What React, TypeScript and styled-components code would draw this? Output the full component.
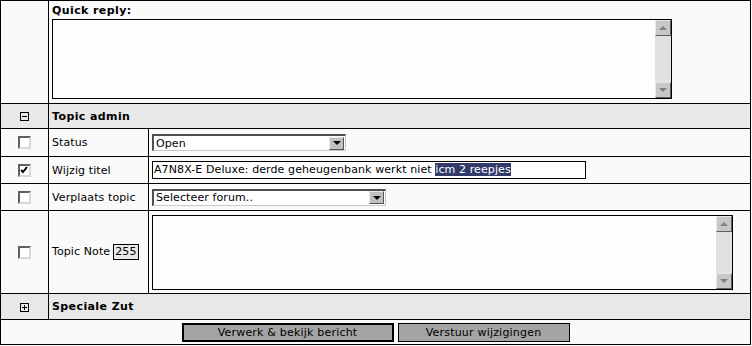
import styled, { createGlobalStyle } from "styled-components";

const GlobalStyle = createGlobalStyle`
  body {
    margin: 0;
    background: #fafafa;
    font-family: "DejaVu Sans", Verdana, sans-serif;
    font-size: 11px;
    letter-spacing: 0.1px;
    color: #000;
  }
`;

const Table = styled.table`
  width: 751px;
  border-collapse: collapse;
  border: 1px solid #000;
  background: #fafafa;
`;

const Row = styled.tr<{ $h: number }>`
  height: ${({ $h }) => $h}px;
`;

const Cell = styled.td<{ $head?: boolean; $w?: number }>`
  border: 1px solid #000;
  padding: 0 3px;
  vertical-align: middle;
  background: ${({ $head }) => ($head ? "#e8e8e8" : "#fafafa")};
  font-weight: ${({ $head }) => ($head ? "bold" : "normal")};
  letter-spacing: ${({ $head }) => ($head ? "0.4px" : "0.1px")};
  width: ${({ $w }) => ($w ? `${$w}px` : "auto")};
  white-space: nowrap;
`;

const IconCell = styled(Cell)`
  text-align: center;
  padding: 0;
  width: 47px;
`;

const QuickCell = styled(Cell)`
  vertical-align: top;
  padding: 3px 3px 4px 3px;
`;

const Caption = styled.div`
  font-weight: bold;
  letter-spacing: 0.4px;
  line-height: 14px;
  margin-bottom: 1px;
`;

const TextBox = styled.div<{ $w: number; $h: number }>`
  display: flex;
  width: ${({ $w }) => $w}px;
  height: ${({ $h }) => $h}px;
  border: 1px solid #000;
  background: #fdfdfd;
  box-sizing: border-box;
`;

const Area = styled.textarea`
  flex: 1;
  border: none;
  outline: none;
  resize: none;
  background: transparent;
  font: inherit;
`;

const Scrollbar = styled.div`
  width: 16px;
  display: flex;
  flex-direction: column;
  justify-content: space-between;
  background: #e0e0e0;
`;

const ScrollBtn = styled.div`
  width: 16px;
  height: 16px;
  box-sizing: border-box;
  background: #c8c8c8;
  border-top: 1px solid #e8e8e8;
  border-left: 1px solid #e8e8e8;
  border-right: 1px solid #606060;
  border-bottom: 1px solid #606060;
  display: flex;
  align-items: center;
  justify-content: center;
`;

const Arrow = styled.span<{ $up?: boolean; $color?: string }>`
  width: 0;
  height: 0;
  border-left: 4px solid transparent;
  border-right: 4px solid transparent;
  ${({ $up, $color }) =>
    $up
      ? `border-bottom: 4px solid ${$color || "#808080"};`
      : `border-top: 4px solid ${$color || "#808080"};`}
`;

const ToggleBox = styled.span`
  display: inline-flex;
  align-items: center;
  justify-content: center;
  width: 9px;
  height: 9px;
  box-sizing: border-box;
  border: 1px solid #000;
  position: relative;
  vertical-align: middle;
`;

const Bar = styled.span<{ $vertical?: boolean }>`
  position: absolute;
  background: #000;
  ${({ $vertical }) =>
    $vertical
      ? "width: 1px; height: 5px; left: 3px; top: 1px;"
      : "width: 5px; height: 1px; left: 1px; top: 3px;"}
`;

const Check = styled.span`
  display: inline-flex;
  align-items: center;
  justify-content: center;
  width: 13px;
  height: 13px;
  box-sizing: border-box;
  background: #fff;
  border-top: 2px solid #606060;
  border-left: 2px solid #606060;
  border-right: 2px solid #d8d8d8;
  border-bottom: 2px solid #d8d8d8;
  vertical-align: middle;
`;

const Select = styled.div<{ $w: number }>`
  display: flex;
  align-items: center;
  width: ${({ $w }) => $w}px;
  height: 17px;
  box-sizing: border-box;
  background: #fff;
  border-top: 2px solid #505050;
  border-left: 2px solid #505050;
  border-right: 1px solid #c8c8c8;
  border-bottom: 1px solid #c8c8c8;
  padding-left: 2px;
`;

const SelectText = styled.span`
  flex: 1;
`;

const DropBtn = styled.div`
  width: 15px;
  height: 13px;
  box-sizing: border-box;
  background: #c0c0c0;
  border-top: 1px solid #e8e8e8;
  border-left: 1px solid #e8e8e8;
  border-right: 1px solid #505050;
  border-bottom: 1px solid #505050;
  display: flex;
  align-items: center;
  justify-content: center;
  margin-right: 1px;
`;

const TitleInput = styled.div`
  width: 434px;
  height: 18px;
  box-sizing: border-box;
  border: 1px solid #000;
  background: #fff;
  line-height: 16px;
  padding-left: 1px;
`;

const Selected = styled.span`
  background: #313a6a;
  color: #fff;
`;

const Counter = styled.span`
  display: inline-block;
  border: 1px solid #000;
  background: #e8e8e8;
  padding: 0 1px;
  margin-left: 3px;
  line-height: 14px;
`;

const ButtonBar = styled.td`
  border: 1px solid #000;
  text-align: center;
  padding: 0;
  background: #fafafa;
`;

const Button = styled.button<{ $default?: boolean }>`
  font: inherit;
  font-size: 11px;
  letter-spacing: 0.2px;
  background: #a4a4a4;
  color: #000;
  height: 19px;
  padding: 0;
  box-sizing: border-box;
  border: ${({ $default }) => ($default ? "2px" : "1px")} solid #000;
  margin: 0 2px;
  vertical-align: middle;
`;

const ScrollTextBox = ({ w, h }: { w: number; h: number }) => (
  <TextBox $w={w} $h={h}>
    <Area />
    <Scrollbar>
      <ScrollBtn>
        <Arrow $up />
      </ScrollBtn>
      <ScrollBtn>
        <Arrow />
      </ScrollBtn>
    </Scrollbar>
  </TextBox>
);

const Dropdown = ({ w, label }: { w: number; label: string }) => (
  <Select $w={w}>
    <SelectText>{label}</SelectText>
    <DropBtn>
      <Arrow $color="#000" />
    </DropBtn>
  </Select>
);

const Toggle = ({ open }: { open: boolean }) => (
  <ToggleBox>
    <Bar />
    {!open && <Bar $vertical />}
  </ToggleBox>
);

const CheckMark = () => (
  <svg width="9" height="9" viewBox="0 0 9 9">
    <path d="M1 4 L3 6 L7 1" stroke="#000" strokeWidth="2" fill="none" />
  </svg>
);

export default function App() {
  return (
    <>
      <GlobalStyle />
      <Table>
        <tbody>
          <Row $h={101}>
            <IconCell />
            <QuickCell colSpan={2}>
              <Caption>Quick reply:</Caption>
              <ScrollTextBox w={620} h={80} />
            </QuickCell>
          </Row>
          <Row $h={25}>
            <IconCell $head>
              <Toggle open />
            </IconCell>
            <Cell $head colSpan={2}>Topic admin</Cell>
          </Row>
          <Row $h={28}>
            <IconCell>
              <Check />
            </IconCell>
            <Cell $w={93}>Status</Cell>
            <Cell>
              <Dropdown w={194} label="Open" />
            </Cell>
          </Row>
          <Row $h={27}>
            <IconCell>
              <Check>
                <CheckMark />
              </Check>
            </IconCell>
            <Cell>Wijzig titel</Cell>
            <Cell>
              <TitleInput>
                A7N8X-E Deluxe: derde geheugenbank werkt niet <Selected>icm 2 reepjes</Selected>
              </TitleInput>
            </Cell>
          </Row>
          <Row $h={27}>
            <IconCell>
              <Check />
            </IconCell>
            <Cell>Verplaats topic</Cell>
            <Cell>
              <Dropdown w={234} label="Selecteer forum.." />
            </Cell>
          </Row>
          <Row $h={83}>
            <IconCell>
              <Check />
            </IconCell>
            <Cell>
              Topic Note<Counter>255</Counter>
            </Cell>
            <Cell>
              <ScrollTextBox w={581} h={75} />
            </Cell>
          </Row>
          <Row $h={26}>
            <IconCell $head>
              <Toggle open={false} />
            </IconCell>
            <Cell $head colSpan={2}>Speciale Zut</Cell>
          </Row>
          <Row $h={25}>
            <ButtonBar colSpan={3}>
              <Button $default style={{ width: 212 }}>Verwerk &amp; bekijk bericht</Button>
              <Button style={{ width: 172 }}>Verstuur wijzigingen</Button>
            </ButtonBar>
          </Row>
        </tbody>
      </Table>
    </>
  );
}
